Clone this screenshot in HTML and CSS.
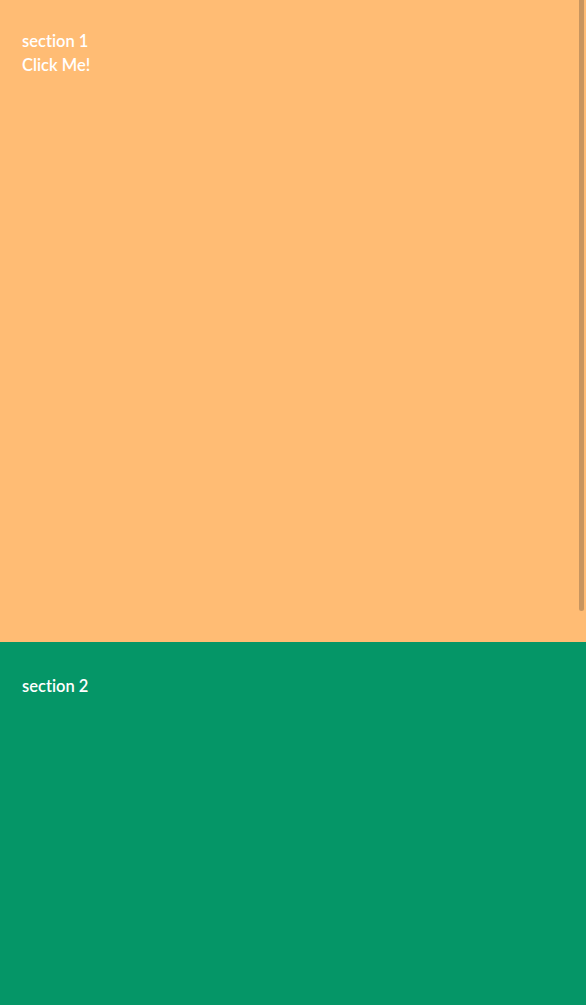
FILE: index.html
```html
<!DOCTYPE html>
<html>
<head>
<meta charset="utf-8">
<link rel="stylesheet" href="styles.css">
</head>
<body>
<section class="section section-one">
  <div class="label">section 1</div>
  <div class="label">Click Me!</div>
  <div class="scroll-thumb"></div>
</section>
<section class="section section-two">
  <div class="label">section 2</div>
</section>
</body>
</html>
```
FILE: styles.css
```css
html, body {
  margin: 0;
  padding: 0;
}
body {
  font-family: Lato, "Liberation Sans", sans-serif;
  font-size: 16.5px;
  line-height: 24px;
  color: #ffffff;
  overflow: hidden;
}
.section {
  position: relative;
  box-sizing: border-box;
  padding: 29px 22px;
}
.section-one {
  height: 642px;
  background: #ffbc74;
}
.section-two {
  height: 363px;
  padding-top: 32px;
  background: #059667;
}
.label {
  font-weight: 600;
  font-variant-ligatures: none;
}
.scroll-thumb {
  position: absolute;
  top: 0;
  right: 2px;
  width: 5px;
  height: 611px;
  background: #c8955f;
  border-radius: 0 0 3px 3px;
}
```
